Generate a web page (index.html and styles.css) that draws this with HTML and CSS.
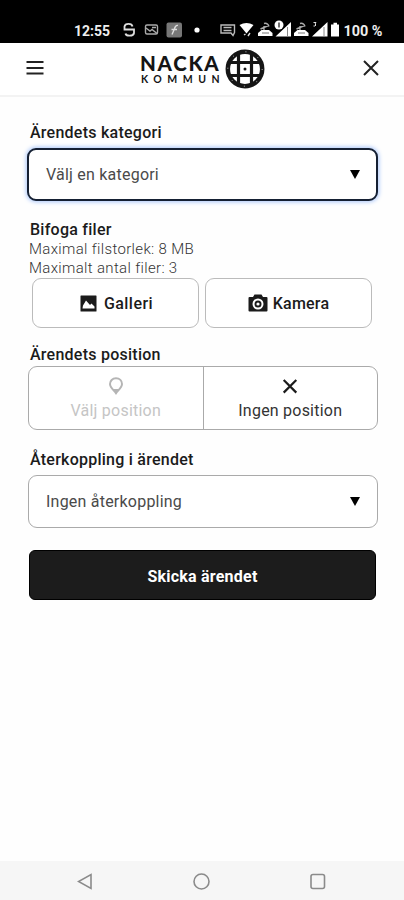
FILE: index.html
```html
<!DOCTYPE html>
<html lang="sv">
<head>
<meta charset="utf-8">
<title>Nacka kommun</title>
<link rel="stylesheet" href="styles.css">
</head>
<body>
<div class="status">
  <svg width="404" height="43" viewBox="0 0 404 43" fill="none" stroke="#ddd" stroke-width="1.4">
    <g class="status-text">
      <text x="74" y="35.500" textLength="36" lengthAdjust="spacingAndGlyphs">12:55</text>
      <text x="343.500" y="35.500" textLength="39" lengthAdjust="spacingAndGlyphs">100 %</text>
    </g>
    <path d="M132.500 26.500C132 23 125 23 124.500 26.500v3h9.500v3.500c-.5 3.500-8 3.500-8.500.5" stroke-width="1.800"/>
    <rect x="145.500" y="25" width="12" height="9" rx="1.500" stroke="#aaa"/>
    <path d="M146 28l4 3 2-1.500 5 4M152 27.500h4" stroke="#aaa"/>
    <rect x="166.500" y="22.500" width="15.500" height="15" rx="2" fill="#777" stroke="none"/>
    <path d="M178 25.500c-3-.8-3 2-4 4.500l-2 4.500M171.500 29.500h5.500" stroke="#ddd"/>
    <circle cx="197" cy="30" r="2.600" fill="#fff" stroke="none"/>
    <path d="M221 25h13.500v7.500l-1.500 3-2-2.500h-10zM223.500 27.500h8M223.500 30.500h8" stroke="#bbb"/>
    <path d="M239.500 25q7-4 14 0l-7 8.500z" fill="#fff" stroke="none"/>
    <path d="M244 35l1.500-1M250 33l-2 3"/>
    <g id="call">
      <path d="M258 36v-3l3.500-3h7.500l3.500 3v3z" fill="#fff" stroke="none"/>
      <path d="M260.500 29l8-3.500M264 23.500q4-1 5 3M264 26v4" stroke="#aaa"/>
      <path d="M262 33h7" stroke="#777" stroke-width="1"/>
    </g>
    <use href="#call" x="36"/>
    <path d="M275.500 36.500L291 22v14.500zM312 36.500L327.500 22v14.500z" fill="#fff" stroke="none"/>
    <path d="M287.500 27v9M324 27v9" stroke="#888" stroke-width="1"/>
    <circle cx="279" cy="25" r="4.500" fill="#fff" stroke="none"/>
    <path d="M279 22.500v5" stroke="#333"/>
    <path d="M313.500 22.500h2.500l-1 1.500q2 1 0 2h-1.500" stroke-width="1"/>
    <path d="M331 24.500h2.500v-1.800h3.500v1.800h2v12h-8z" fill="#fff" stroke="none"/>
  </svg>
</div>
<header class="header">
  <svg class="menu" width="18" height="16" viewBox="0 0 18 16" stroke="#222" stroke-width="2.200"><path d="M.5 2h17M.5 8h17M.5 13.500h17"/></svg>
  <div class="logo">
    <div class="words"><span class="logo-top">NACKA</span><span class="logo-sub">KOMMUN</span></div>
    <svg width="40" height="40" viewBox="0 0 40 40" fill="none" stroke="#151515">
      <circle cx="20" cy="20" r="17.200" fill="#fff" stroke-width="4.500"/>
      <path d="M13.500 4v32M26.500 4v32M4 13.500h32M4 26.500h32" stroke-width="3.200"/>
      <circle cx="20" cy="20" r="17.200" stroke="#ccc" stroke-width="1" stroke-dasharray="1 12.500"/>
      <circle cx="20" cy="20" r="1.500" fill="#151515" stroke="none"/>
    </svg>
  </div>
  <svg class="close" width="16" height="16" viewBox="0 0 16 16" stroke="#222" stroke-width="2"><path d="M1 1l14 14M15 1L1 15"/></svg>
</header>
<main class="form">
  <h2 class="label l1">Ärendets kategori</h2>
  <div class="select focused"><span>Välj en kategori</span><svg width="10" height="9" viewBox="0 0 10 9"><path d="M0 0h10L5 9z"/></svg></div>
  <h2 class="label l2">Bifoga filer</h2>
  <p class="hint">Maximal filstorlek: 8 MB</p>
  <p class="hint">Maximalt antal filer: 3</p>
  <div class="files">
    <div class="file"><svg width="17" height="17" viewBox="0 0 17 17"><path fill="#1b1b1b" fill-rule="evenodd" d="M1 .5h15q.5 0 .5.500v15q0 .5-.5.500H1q-.5 0-.5-.5V1q0-.5.500-.5zM2.500 13.500h12v-2l-3-3-1.500 1.500-4-4.500-3 5z"/></svg><span class="gal">Galleri</span></div>
    <div class="file"><svg width="20" height="18" viewBox="0 0 20 18"><path fill="#1b1b1b" d="M1.500 3H5l1.500-2.500h7L15 3h3.500q1 0 1 1v12.500q0 1-1 1h-17q-1 0-1-1V4q0-1 1-1z"/><circle cx="10" cy="10" r="4.500" fill="#1b1b1b" stroke="#fff" stroke-width="2"/><circle cx="10" cy="10" r="1.600" fill="#fff"/></svg><span class="kam">Kamera</span></div>
  </div>
  <h2 class="label l3">Ärendets position</h2>
  <div class="position">
    <div class="choice off"><svg width="16" height="18" viewBox="0 0 16 18" fill="none"><path d="M8 1.300c-3.600 0-6 2.500-6 5.700 0 3.800 4 6.200 6 9.200 2-3 6-5.400 6-9.200 0-3.200-2.400-5.700-6-5.700z" stroke="#b5b5b5" stroke-width="2"/><path d="M4.500 12h7L8 16.500z" fill="#b5b5b5"/></svg><span>Välj position</span></div>
    <div class="choice"><svg width="16" height="18" viewBox="0 0 16 18" stroke="#1b1b1b" stroke-width="2.200"><path d="M1.700 3l12.600 12.600M14.300 3L1.700 15.600"/></svg><span>Ingen position</span></div>
  </div>
  <h2 class="label l4">Återkoppling i ärendet</h2>
  <div class="select"><span>Ingen återkoppling</span><svg width="10" height="9" viewBox="0 0 10 9"><path d="M0 0h10L5 9z"/></svg></div>
  <div class="submit"><span>Skicka ärendet</span></div>
</main>
<footer class="nav">
  <svg width="16" height="18" viewBox="0 0 16 18"><path d="M14 2.500v14L1.500 9.500z"/></svg>
  <svg width="18" height="18" viewBox="0 0 18 18"><circle cx="9.500" cy="9.500" r="7.500"/></svg>
  <svg width="18" height="18" viewBox="0 0 18 18"><rect x="2" y="2.500" width="13.500" height="14" rx="2"/></svg>
</footer>
</body>
</html>
```
FILE: styles.css
```css
* { box-sizing: border-box; }
body { margin: 0; width: 404px; height: 900px; display: flex; flex-direction: column; background: #fefefe; color: #1b1b1b; font-family: Roboto, sans-serif; font-size: 16px; letter-spacing: .22px; overflow: hidden; }
svg { display: block; flex: none; }
.status { height: 43px; background: #000; letter-spacing: 0; }
.status-text { font-size: 15px; font-weight: 700; fill: #eee; stroke: none; }
.header { height: 54px; flex: none; display: flex; align-items: flex-start; border-bottom: 2px solid #f3f3f3; background: #fff; }
.menu { margin: 17px 0 0 26px; }
.logo { width: 125px; margin: 6px 0 0 96px; display: flex; justify-content: space-between; color: #151515; font-family: Lato, sans-serif; font-weight: 700; white-space: nowrap; }
.words { width: 81px; display: flex; flex-direction: column; padding-top: 4px; }
.logo-top { font-size: 20.5px; line-height: 20px; letter-spacing: 1.7px; font-weight: 900; }
.logo-sub { font-size: 10.5px; line-height: 13px; letter-spacing: 5.5px; margin-left: 1px; }
.close { margin: 17px 0 0 98px; }
.form { flex: 1; padding: 25px 26px 0 28px; }
.label { margin: 0 0 0 2px; height: 20px; font-size: 16px; line-height: 21px; letter-spacing: .25px; font-weight: 500; white-space: nowrap; }
.l1 { margin-bottom: 6px; }
.select { height: 53px; display: flex; align-items: center; justify-content: space-between; padding: 0 17px; border: 1px solid #aaa; border-radius: 9px; background: #fff; color: #4a4a4a; }
.focused { margin-left: -1px; border: 2px solid #152033; box-shadow: 0 0 4px 1px #a9c6fa; padding: 0 16px 0 17px; }
.l2 { margin-top: 18px; }
.hint { margin: 0 0 0 1px; height: 19px; line-height: 20px; font-size: 15px; letter-spacing: .34px; font-weight: 300; color: #333; }
.files { display: flex; gap: 6px; margin: 1px 6px 0 4px; }
.file { flex: 1; height: 50px; display: flex; align-items: center; justify-content: center; gap: 7px; border: 1px solid #bbb; border-radius: 9px; font-weight: 500; background: #fff; }
.gal { letter-spacing: .45px; margin-right: -2px; }
.kam { margin-left: -2px; }
.l3 { margin-top: 16px; }
.position { display: flex; height: 64px; margin-top: 2px; border: 1px solid #aaa; border-radius: 9px; background: #fff; }
.choice { flex: 1; display: flex; flex-direction: column; align-items: center; padding-top: 10px; color: #333; }
.choice span { line-height: 20px; margin-top: 6px; }
.off { border-right: 1px solid #aaa; }
.off span { color: #c5c5c5; }
.l4 { margin: 19px 0 6px 2px; }
.submit { height: 50px; margin: 22px 2px 0 1px; padding-top: 2px; display: flex; align-items: center; justify-content: center; border-radius: 6px; background: #1c1c1c; color: #fff; font-weight: 700; border: 1px solid #000; }
.nav { height: 39px; display: flex; align-items: center; justify-content: space-between; padding: 1px 77px 0; background: #f6f6f6; fill: none; stroke: #8b8b8b; stroke-width: 1.6; }
```
